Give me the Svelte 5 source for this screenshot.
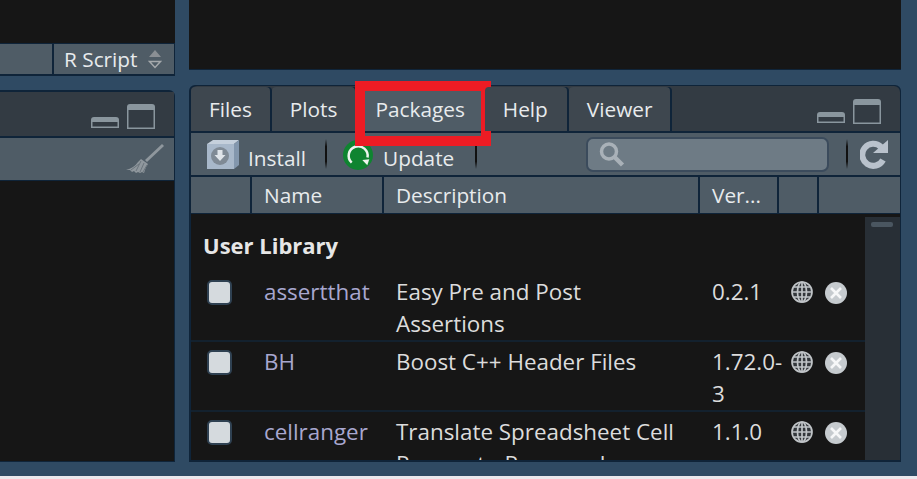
<script>
	const tabs = ['Files', 'Plots', 'Packages', 'Help', 'Viewer'];
	const packages = [
		{ name: 'assertthat', desc: 'Easy Pre and Post Assertions', ver: '0.2.1' },
		{ name: 'BH', desc: 'Boost C++ Header Files', ver: '1.72.0-\n3' },
		{ name: 'cellranger', desc: 'Translate Spreadsheet Cell Ranges to Rows and', ver: '1.1.0' }
	];
</script>

{#snippet paneButtons()}
	<div class="pane-btns">
		<svg width="28" height="14" viewBox="0 0 28 14">
			<path d="M0 13V5q0-3 3-3h22q3 0 3 3v8z" fill="#8a969e" />
			<rect x="1.5" y="7" width="25" height="4.5" fill="#333b43" />
		</svg>
		<svg width="28" height="25" viewBox="0 0 28 25">
			<path d="M0 25V3q0-3 3-3h22q3 0 3 3v22z" fill="#8a969e" />
			<rect x="1.5" y="6" width="25" height="17.5" fill="#333b43" />
		</svg>
	</div>
{/snippet}

{#snippet sep()}
	<span class="sep"></span>
{/snippet}

<div class="page">
	<div class="workspace">
		<div class="col left">
			<div class="black-top"></div>
			<div class="type-bar">
				<div class="type-fill"></div>
				<div class="type-sel">
					R Script
					<svg width="14" height="20" viewBox="0 0 14 20">
						<path d="M1 8L7 1l6 7z" fill="#8a8f94" />
						<path d="M1.500 12.500h11L7 18.500z" fill="none" stroke="#a5a9ac" stroke-width="1.500" />
					</svg>
				</div>
			</div>
			<div class="left-pane">
				<div class="left-tabs">{@render paneButtons()}</div>
				<div class="left-tools">
					<svg width="38" height="32" viewBox="0 0 38 32">
						<path d="M37 2L20 18" stroke="#8f979d" stroke-width="3" />
						<path d="M0 27Q8 25 12 19l3-3 7 5-2 3-2 6-2-1-2 1-2-1-2 1-2-2-2 1-2-2z" fill="#8f979d" />
						<path d="M15 18l-5 10M18 20l-4 9M21 22l-4 7M13 21l-8 6" stroke="#6a747c" stroke-width="1" />
					</svg>
				</div>
				<div class="left-body"></div>
			</div>
		</div>

		<div class="col right">
			<div class="black-right"></div>
			<div class="pkg-pane">
				<div class="tabs">
					{#each tabs as tab}
						<div class="tab" class:active={tab === 'Packages'}>
							{tab}
							{#if tab === 'Packages'}<span class="callout"></span>{/if}
						</div>
					{/each}
					{@render paneButtons()}
				</div>

				<div class="toolbar">
					<div class="tool install">
						<svg width="34" height="31" viewBox="0 0 34 31">
							<path d="M0 5l6-4h26l-5 4z" fill="#c5d0dc" />
							<path d="M27 5l5-4v25l-5 4z" fill="#8397ad" />
							<rect x="0" y="5" width="27" height="25" fill="#a8b8ca" />
							<circle cx="13" cy="17" r="9" fill="#7f8a95" />
							<path d="M10.500 11h5v5h3l-5.500 6-5.500-6h3z" fill="#dfe4e9" />
						</svg>
						<span>Install</span>
					</div>
					{@render sep()}
					<div class="tool update">
						<svg width="30" height="30" viewBox="0 0 30 30">
							<circle cx="15" cy="15" r="15" fill="#0f8430" />
							<path d="M8.700 22.700A9.500 9.500 0 1 1 24.500 17.500" fill="none" stroke="#eef5ee" stroke-width="2.500" />
							<path d="M19.300 20l7-.7-2 6z" fill="#eef5ee" />
						</svg>
						<span>Update</span>
					</div>
					{@render sep()}
					<div class="search">
						<svg width="27" height="27" viewBox="0 0 27 27">
							<circle cx="11" cy="10.500" r="7.500" fill="none" stroke="#a9b1b8" stroke-width="3.500" />
							<path d="M16.500 16l8 8" stroke="#a9b1b8" stroke-width="4.500" />
						</svg>
					</div>
					{@render sep()}
					<svg class="refresh" width="29" height="30" viewBox="0 0 29 30">
						<path d="M23 21A11 11 0 1 1 21 8" fill="none" stroke="#b9c2cc" stroke-width="6" />
						<path d="M13 14L28 1v13z" fill="#b9c2cc" />
					</svg>
				</div>

				<div class="cols head">
					<div></div>
					<div>Name</div>
					<div>Description</div>
					<div>Ver...</div>
					<div></div>
					<div></div>
				</div>

				<div class="list">
					<div class="rows">
						<div class="lib-title">User Library</div>
						{#each packages as p}
							<div class="cols row">
								<div><span class="check"></span></div>
								<div class="name">{p.name}</div>
								<div class="desc">{p.desc}</div>
								<div class="ver">{p.ver}</div>
								<div class="ic">
									<svg width="22" height="22" viewBox="0 0 22 22" fill="none" stroke="#c0c4c7" stroke-width="1.700">
										<circle cx="11" cy="11" r="10" fill="#33373b" />
										<ellipse cx="11" cy="11" rx="4.500" ry="10" />
										<path d="M11 1v20M2.500 6h17M1 11h20M2.500 16h17" />
									</svg>
								</div>
								<div class="ic del">
									<svg width="22" height="22" viewBox="0 0 22 22">
										<circle cx="11" cy="11" r="11" fill="#c6cbcf" />
										<path d="M6 6l10 10M16 6L6 16" stroke="#f6f7f8" stroke-width="2.600" />
									</svg>
								</div>
							</div>
						{/each}
					</div>
					<div class="scroll"><span class="thumb"></span></div>
				</div>
			</div>
		</div>
	</div>
	<div class="strip"></div>
</div>

<style>
	:global(body) {
		margin: 0;
		background: #2f4a63;
		font-family: 'Open Sans', 'Noto Sans', sans-serif;
		color: #e6e6e6;
		overflow: hidden;
	}

	.page {
		width: 917px;
		height: 479px;
		display: flex;
		flex-direction: column;
		overflow: hidden;
	}

	.workspace {
		height: 476px;
		display: flex;
		gap: 14px;
		padding-bottom: 14px;
		box-sizing: border-box;
	}

	.strip {
		flex: 1;
		background: #ebe8ec;
	}

	.col {
		display: flex;
		flex-direction: column;
	}

	.left {
		width: 175px;
	}

	.right {
		width: 712px;
	}

	.black-top {
		height: 43px;
		background: #161616;
	}

	.type-bar {
		height: 33px;
		display: flex;
		gap: 2px;
		background: #0f2439;
		padding: 1px 1px 2px 0;
		box-sizing: border-box;
	}

	.type-fill {
		width: 52px;
		background: #4f5c66;
	}

	.type-sel {
		flex: 1;
		background: #4f5c66;
		display: flex;
		align-items: center;
		justify-content: space-between;
		padding: 0 12px 0 10px;
		font-size: 20.8px;
		color: #e8ebed;
	}

	.left-pane {
		flex: 1;
		margin-top: 14px;
		display: flex;
		flex-direction: column;
		background: #0f2439;
		border-radius: 0 6px 0 0;
		padding: 2px 1px 1px 0;
		min-height: 0;
	}

	.left-tabs {
		height: 44px;
		background: #333b43;
		display: flex;
		justify-content: flex-end;
		align-items: flex-end;
		padding: 0 19px 7px 0;
		box-sizing: border-box;
	}

	.pane-btns {
		display: flex;
		align-items: flex-end;
		gap: 8px;
	}

	.left-tools {
		height: 42px;
		margin-top: 2px;
		background: #4f5c66;
		display: flex;
		justify-content: flex-end;
		align-items: center;
		padding-right: 10px;
		box-sizing: border-box;
	}

	.left-body {
		flex: 1;
		margin-top: 1px;
		background: #161616;
	}

	.black-right {
		height: 69px;
		background: #161616;
		border-bottom: 1px solid #0f2439;
	}

	.pkg-pane {
		flex: 1;
		margin-top: 15px;
		background: #0f2439;
		border-radius: 6px 6px 0 0;
		padding: 1px 1px 2px 2px;
		display: flex;
		flex-direction: column;
		min-height: 0;
	}

	.tabs {
		height: 45px;
		background: #333b43;
		border-radius: 6px 6px 0 0;
		display: flex;
		align-items: flex-end;
		gap: 2px;
		flex-shrink: 0;
		box-sizing: border-box;
	}

	.tab {
		position: relative;
		height: 44px;
		box-sizing: border-box;
		padding: 0 18px;
		background: #3e474f;
		border-radius: 4px 4px 0 0;
		font-size: 20.8px;
		line-height: 44px;
		color: #e8ebed;
		white-space: nowrap;
		box-shadow: 2px 0 0 #0f2439;
	}

	.tab:nth-child(4) {
		padding-right: 19px;
	}

	.tab.active {
		background: #4f5c66;
	}

	.callout {
		position: absolute;
		left: -2px;
		top: -6px;
		right: -8px;
		bottom: -15px;
		border: 10px solid #ed1c24;
		pointer-events: none;
	}

	.tabs .pane-btns {
		margin-left: auto;
		padding: 0 19px 7px 0;
	}

	.toolbar {
		height: 42px;
		margin-top: 2px;
		background: #4f5c66;
		display: flex;
		align-items: center;
		flex-shrink: 0;
		padding-left: 16px;
		font-size: 20.8px;
		color: #e8ebed;
		box-sizing: border-box;
	}

	.tool {
		display: flex;
		align-items: center;
	}

	.tool span {
		position: relative;
		top: 4px;
	}

	.install {
		gap: 7px;
		width: 118px;
	}

	.update {
		gap: 10px;
		margin-left: 16px;
		margin-top: 2px;
		width: 132px;
	}

	.update span {
		top: 3px;
	}

	.sep {
		width: 2px;
		height: 30px;
		background: linear-gradient(#4f5c66, #111 25%, #111 75%, #4f5c66);
	}

	.search {
		width: 243px;
		height: 35px;
		margin-left: 109px;
		margin-right: 17px;
		box-sizing: border-box;
		background: #6e7b85;
		border: 2px solid #3b4b5c;
		border-radius: 7px;
		display: flex;
		align-items: center;
		padding-left: 10px;
	}

	.refresh {
		margin-left: 12px;
	}

	.cols {
		display: grid;
		grid-template-columns: 61px 132px 316px 79px 40px 1fr;
		flex-shrink: 0;
	}

	.head {
		height: 36px;
		margin-top: 2px;
		background: #0f2439;
		font-size: 20.8px;
		color: #e8ebed;
	}

	.head > div {
		background: #4f5c66;
		padding-left: 12px;
		line-height: 36px;
		margin-right: 2px;
		white-space: nowrap;
	}

	.head > div:last-child {
		margin-right: 0;
	}

	.list {
		flex: 1;
		margin-top: 1px;
		background: #161616;
		display: flex;
		min-height: 0;
		overflow: hidden;
	}

	.rows {
		flex: 1;
		min-width: 0;
	}

	.lib-title {
		height: 58px;
		box-sizing: border-box;
		padding: 16px 0 0 12px;
		font-size: 22px;
		font-weight: 700;
		color: #e6e6e6;
	}

	.row {
		height: 70px;
		box-sizing: border-box;
		border-bottom: 2px solid #13212e;
		font-size: 22.4px;
		line-height: 32px;
		color: #dcdcdc;
		padding-top: 4px;
		grid-template-columns: 61px 132px 316px 91px 34px 1fr;
	}

	.row > div {
		padding-left: 12px;
		box-sizing: border-box;
	}

	.row > div:first-child {
		padding-left: 16px;
		padding-top: 4px;
	}

	.check {
		display: block;
		width: 25px;
		height: 25px;
		box-sizing: border-box;
		background: #d5dade;
		border: 2px solid #2f4152;
		border-radius: 5px;
	}

	.name {
		color: #a8a7cf;
	}

	.row > .desc {
		padding-right: 19px;
	}

	.ver {
		white-space: pre;
	}

	.row > .ic {
		padding-left: 0;
		padding-top: 5px;
		line-height: 0;
	}

	.row > .del {
		padding-top: 6px;
	}

	.scroll {
		width: 35px;
		background: #282f36;
		padding: 5px 0 0 6px;
		box-sizing: border-box;
		flex-shrink: 0;
		margin-top: 3px;
	}

	.thumb {
		display: block;
		width: 22px;
		height: 5px;
		border-radius: 2px;
		background: #4a5660;
	}
</style>
